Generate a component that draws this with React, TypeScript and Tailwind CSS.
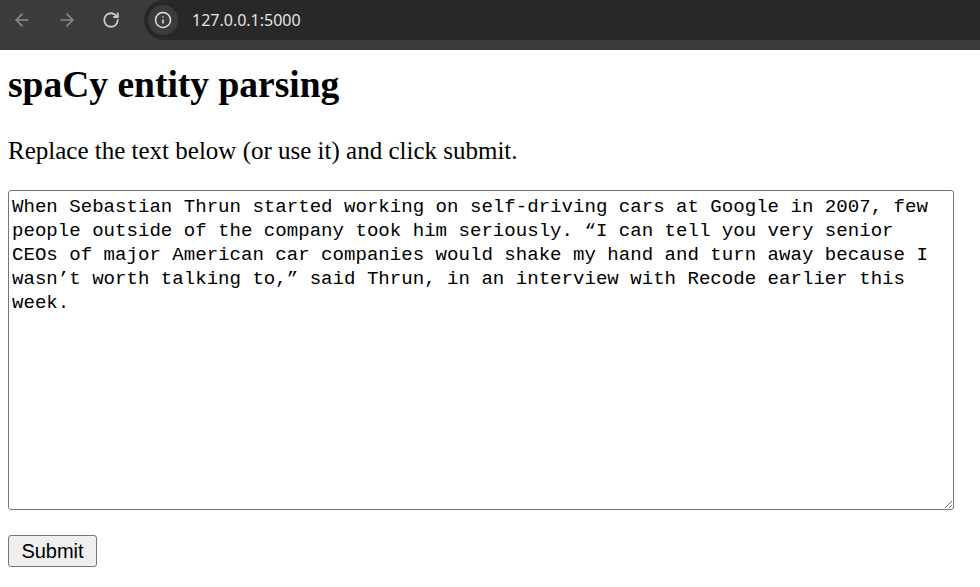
import { ArrowLeft, ArrowRight, RotateCw, Info } from 'lucide-react';

const SAMPLE =
  'When Sebastian Thrun started working on self-driving cars at Google in 2007, few people outside of the company took him seriously. \u201cI can tell you very senior CEOs of major American car companies would shake my hand and turn away because I wasn\u2019t worth talking to,\u201d said Thrun, in an interview with Recode earlier this week.';

function BrowserBar() {
  return (
    <div className="flex h-[50px] bg-[#3c3c3c]">
      <div className="flex h-[40px] items-center gap-[25px] pl-[12px] pr-[24px] text-[#8b8b8b]">
        <ArrowLeft size={20} strokeWidth={2} />
        <ArrowRight size={20} strokeWidth={2} />
        <RotateCw size={18} strokeWidth={2.4} className="text-[#c8c8c8]" />
      </div>
      <div className="flex h-[40px] flex-1 items-center rounded-l-[20px] bg-[#282828] pl-[4px]">
        <div className="flex h-[30px] w-[30px] items-center justify-center rounded-full bg-[#3c3c3c] text-[#e3e3e3]">
          <Info size={18} strokeWidth={2} />
        </div>
        <span
          className="ml-[14px] text-[16px] text-[#e3e3e3]"
          style={{ fontFamily: '"Noto Sans", Roboto, sans-serif' }}
        >
          127.0.0.1:5000
        </span>
      </div>
    </div>
  );
}

export default function App() {
  return (
    <div className="min-h-[587px] bg-white">
      <BrowserBar />
      <div className="px-[8px] text-black" style={{ fontFamily: '"Liberation Serif", "Times New Roman", serif' }}>
        <h1 className="mt-[13px] text-[37.5px] font-bold leading-[43px]">spaCy entity parsing</h1>
        <p className="mt-[30px] text-[25px] leading-[29px]">Replace the text below (or use it) and click submit.</p>
        <form className="mt-[25px]" onSubmit={e => e.preventDefault()}>
          <textarea
            defaultValue={SAMPLE}
            className="block h-[320px] w-[946px] rounded-[3px] border border-[#767676] bg-white pl-[3px] pr-[9px] pt-[4px] text-[19.08px] leading-[24px] text-black"
            style={{ fontFamily: '"Liberation Mono", "Courier New", monospace' }}
          />
          <button
            type="submit"
            className="mt-[25px] block h-[32px] w-[89px] rounded-[3px] border border-[#767676] bg-[#efefef] text-[20px] leading-[24px] text-black"
            style={{ fontFamily: '"Liberation Sans", Arial, sans-serif' }}
          >
            Submit
          </button>
        </form>
      </div>
    </div>
  );
}
